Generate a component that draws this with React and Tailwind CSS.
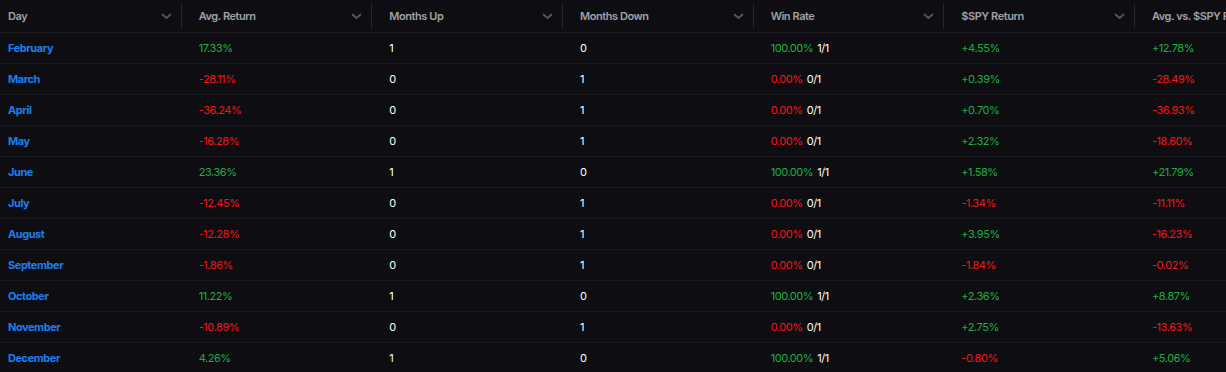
import React from 'react';

const columns = ['Day', 'Avg. Return', 'Months Up', 'Months Down', 'Win Rate', '$SPY Return', 'Avg. vs. $SPY Return'];

const rows = [
  ['February', '17.33%', 1, 0, '+4.55%', '+12.78%'],
  ['March', '-28.11%', 0, 1, '+0.39%', '-28.49%'],
  ['April', '-36.24%', 0, 1, '+0.70%', '-36.93%'],
  ['May', '-16.28%', 0, 1, '+2.32%', '-18.60%'],
  ['June', '23.36%', 1, 0, '+1.58%', '+21.79%'],
  ['July', '-12.45%', 0, 1, '-1.34%', '-11.11%'],
  ['August', '-12.28%', 0, 1, '+3.95%', '-16.23%'],
  ['September', '-1.86%', 0, 1, '-1.84%', '-0.02%'],
  ['October', '11.22%', 1, 0, '+2.36%', '+8.87%'],
  ['November', '-10.89%', 0, 1, '+2.75%', '-13.63%'],
  ['December', '4.26%', 1, 0, '-0.80%', '+5.06%'],
];

const tone = (v) => (String(v).startsWith('-') ? 'text-[#f51414]' : 'text-[#20ad40]');

const Chevron = () => (
  <svg width="11" height="7" viewBox="0 0 11 7" fill="none" className="shrink-0">
    <path d="M1.5 1.5 L5.5 5 L9.5 1.5" stroke="#55555c" strokeWidth="1.8" strokeLinecap="round" strokeLinejoin="round" />
  </svg>
);

const Cell = ({ children, className = '' }) => (
  <div className={`w-[190.67px] shrink-0 pl-2 flex items-center whitespace-nowrap ${className}`}>{children}</div>
);

const App = () => {
  return (
    <div
      className="w-[1226px] h-[372px] overflow-hidden bg-[#0e0e12] text-[11px] tracking-[-0.04em]"
      style={{ fontFamily: 'Inter, "Noto Sans", sans-serif' }}
    >
      {/* header */}
      <div className="flex h-[33px] border-b border-[#1c1c21]">
        {columns.map((c) => (
          <div key={c} className="w-[190.67px] shrink-0 flex items-center pl-2 pr-[9px]">
            <span className="flex-1 font-semibold text-[#a0a0a6] whitespace-nowrap">{c}</span>
            <span className="mr-[9px]"><Chevron /></span>
            <span className="w-px h-[24px] bg-[#26262c]"></span>
          </div>
        ))}
      </div>

      {rows.map(([day, avg, up, down, spy, vs]) => {
        const win = up === 1;
        return (
          <div key={day} className="flex h-[31px] border-b border-[#18181d]">
            <Cell className="font-bold text-[#1a7ef0]">{day}</Cell>
            <Cell className={tone(avg)}>{avg}</Cell>
            <Cell className="text-white">{up}</Cell>
            <Cell className="text-white">{down}</Cell>
            <Cell>
              <span className={win ? 'text-[#20ad40]' : 'text-[#f51414]'}>{win ? '100.00%' : '0.00%'}</span>
              <span className="text-white ml-1">{win ? '1/1' : '0/1'}</span>
            </Cell>
            <Cell className={tone(spy)}>{spy}</Cell>
            <Cell className={tone(vs)}>{vs}</Cell>
          </div>
        );
      })}
    </div>
  );
};

export default App;
